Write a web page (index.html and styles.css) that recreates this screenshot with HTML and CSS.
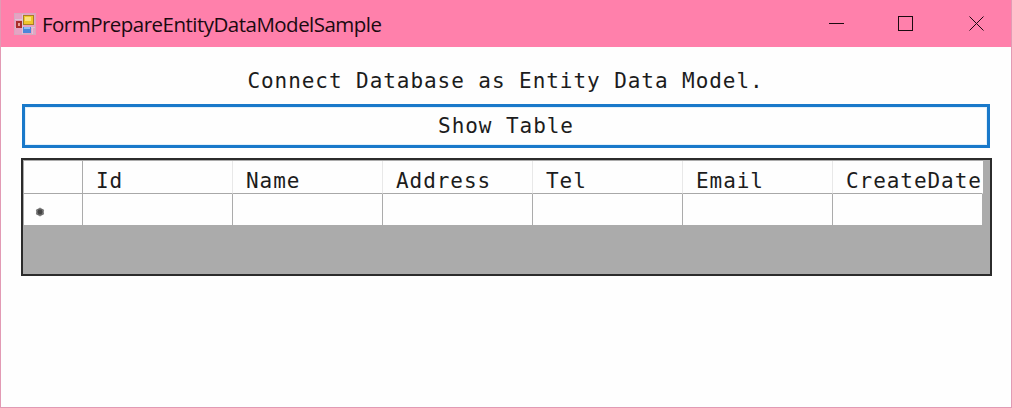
FILE: index.html
```html
<!DOCTYPE html>
<html lang="en">
<head>
<meta charset="utf-8">
<title>FormPrepareEntityDataModelSample</title>
<link rel="stylesheet" href="styles.css">
</head>
<body>
<div class="window">
  <header class="titlebar">
    <svg class="app-icon" width="22" height="22" viewBox="0 0 22 22">
      <rect x=".5" y=".5" width="21" height="21" fill="#e6a3c4" stroke="#d6a9bd"/>
      <path d="M8.500 1v20M1 6.500h8M1 14.500h20M18.500 14v7" stroke="#dcc6d8" fill="none"/>
      <rect x="2" y="8" width="6" height="7" fill="#a92f2b"/>
      <rect x="4" y="10" width="2" height="3" fill="#e7a197"/>
      <rect x="9.500" y="2.500" width="10" height="9" fill="#f0c62c" stroke="#a87f25"/>
      <rect x="11" y="4" width="6" height="4" fill="#fae27c"/>
      <rect x="9" y="14" width="8" height="6" fill="#4c86d9"/>
      <rect x="10" y="14" width="6" height="2" fill="#8fbcf3"/>
    </svg>
    <h1 class="title">FormPrepareEntityDataModelSample</h1>
    <svg class="controls" width="156" height="15" viewBox="0 0 156 15" fill="none" stroke="#1b0a10">
      <path d="M0 7.500h15"/>
      <rect x="69.500" y=".5" width="14" height="14"/>
      <path d="M140.500 .5l14 14M154.500 .5l-14 14"/>
    </svg>
  </header>
  <main class="content">
    <p class="caption">Connect Database as Entity Data Model.</p>
    <button class="show-table">Show Table</button>
    <div class="grid-view">
      <div class="grid-row grid-head">
        <span class="cell"></span><span class="cell">Id</span><span class="cell">Name</span><span class="cell">Address</span><span class="cell">Tel</span><span class="cell">Email</span><span class="cell">CreateDate</span>
      </div>
      <div class="grid-row grid-new">
        <span class="cell marker"><svg width="10" height="10" viewBox="0 0 10 10"><circle cx="5" cy="5" r="3.800" fill="#666"/><path d="M5 .7v8.600M1.200 2.800l7.600 4.400M8.800 2.800L1.200 7.200" stroke="#777" stroke-width="1.500"/><circle cx="5" cy="5" r="2.400" fill="#444"/></svg></span><span class="cell"></span><span class="cell"></span><span class="cell"></span><span class="cell"></span><span class="cell"></span><span class="cell"></span>
      </div>
    </div>
  </main>
</div>
</body>
</html>
```
FILE: styles.css
```css
* { box-sizing: border-box; }
body { margin: 0; background: #fff; }
.window {
  width: 1012px;
  height: 408px;
  border: 1px solid #e29ab4;
  border-top: 0;
  background: #fefefe;
  overflow: hidden;
  font-family: "DejaVu Sans Mono", monospace;
  font-size: 21px;
  letter-spacing: 0.94px;
  color: #1c1c1c;
}
.titlebar {
  display: flex;
  align-items: center;
  height: 47px;
  margin: 0 -1px;
  padding: 0 27px 0 14px;
  background: #ff80ab;
}
.app-icon { flex: none; }
.title {
  margin: 0 0 0 6px;
  font: 400 20.5px/28px "Open Sans", sans-serif;
  letter-spacing: -0.52px;
  color: #1b0a10;
}
.controls { margin-left: auto; }
.content {
  display: flex;
  flex-direction: column;
  padding: 18px 19px 0 20px;
}
.caption {
  margin: 0 2px 0 0;
  height: 39px;
  line-height: 33px;
  text-align: center;
}
.show-table {
  height: 44px;
  margin: 0 2px 10px 1px;
  padding: 0;
  border: 3px solid #1979ca;
  border-radius: 0;
  background: #fefefe;
  box-shadow: inset 0 0 0 1px #e3f1fb;
  font: inherit;
  letter-spacing: inherit;
  color: inherit;
}
.grid-view {
  height: 118px;
  padding: 1px 0 0 1px;
  border: 2px solid #2b2b2b;
  background: #ababab;
}
.grid-row {
  display: grid;
  grid-template-columns: 59px repeat(6, 150px);
  width: 960px;
}
.grid-head { height: 33px; }
.grid-new { height: 31px; }
.cell {
  overflow: hidden;
  padding-left: 13px;
  border-right: 1px solid #ababab;
  background: #fefefe;
  line-height: 40px;
  white-space: nowrap;
}
.grid-head .cell {
  border-right-color: #e8e8e8;
  border-bottom: 1px solid #a8a8a8;
}
.grid-head .cell:first-child { border-right-color: #ababab; }
.grid-head .cell:last-child { border-right-color: #fefefe; }
.marker {
  display: flex;
  align-items: center;
  padding: 4px 0 0 11px;
}
```
